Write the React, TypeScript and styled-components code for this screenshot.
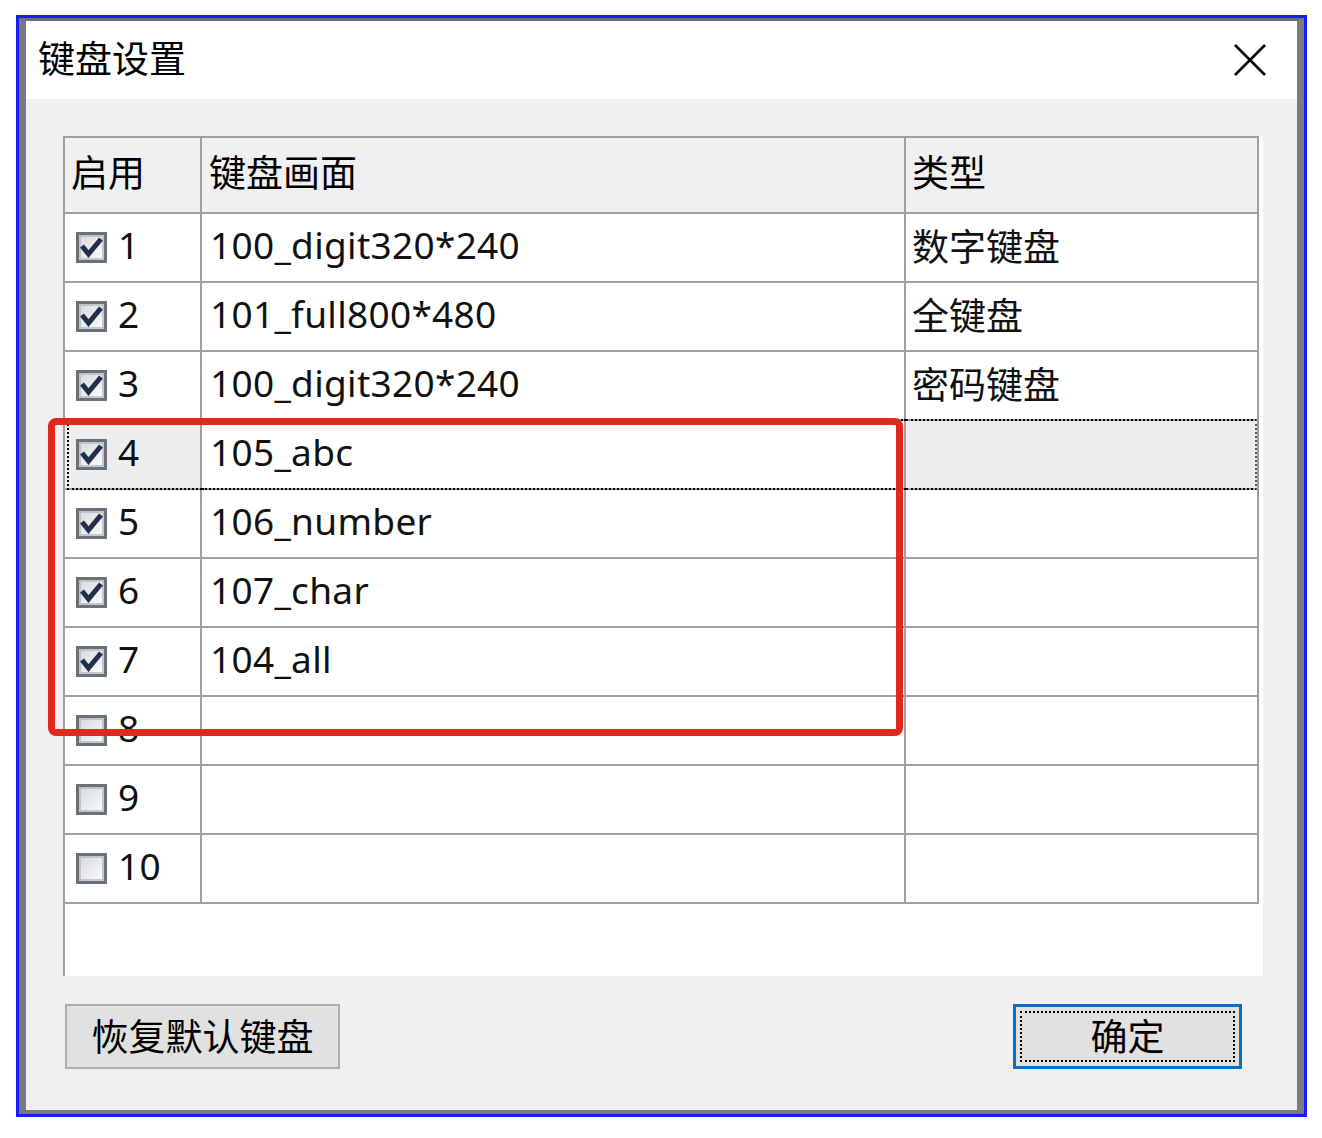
import React from 'react'
import styled, { createGlobalStyle } from 'styled-components'

const GlobalStyle = createGlobalStyle`
  html, body {
    margin: 0;
    padding: 0;
    background: #ffffff;
  }
  body {
    font-family: 'Noto Sans', 'Noto Sans CJK SC', sans-serif;
    color: #000;
  }
`

const Frame = styled.div`
  position: relative;
  margin: 15px 0 0 16px;
  width: 1291px;
  height: 1102px;
  box-sizing: border-box;
  border: 3px solid #1a1aff;
  display: flex;
`

const Window = styled.div`
  flex: 1;
  display: flex;
  flex-direction: column;
  box-sizing: border-box;
  border-top: 3px solid #6f6f6f;
  border-left: 7px solid #7a7a7a;
  border-right: 7px solid #7c7c7c;
  border-bottom: 4px solid #7a7a7a;
  box-shadow: inset 2px 0 0 #cfcfcf;
`

const TitleBar = styled.div`
  height: 78px;
  flex: none;
  background: #ffffff;
  display: flex;
  align-items: center;
  justify-content: space-between;
  padding: 0 30px 0 12px;
`

const Title = styled.div`
  font-family: 'Noto Sans CJK SC', sans-serif;
  font-size: 37px;
  line-height: 1;
  margin-top: -6px;
`

const Body = styled.div`
  flex: 1;
  background: #f0f0f0;
  display: flex;
  flex-direction: column;
  padding: 37px 29px 0 37px;
`

const ListBox = styled.div`
  width: 1200px;
  height: 840px;
  box-sizing: border-box;
  background: #ffffff;
  border-left: 2px solid #a0a0a0;
`

const Grid = styled.div`
  display: grid;
  grid-template-columns: 137px 704px 353px;
  width: 1194px;
`

const HeadCell = styled.div<{ $pad: number }>`
  height: 78px;
  box-sizing: border-box;
  background: #f0f0f0;
  border-top: 2px solid #a0a0a0;
  border-right: 2px solid #a0a0a0;
  border-bottom: 2px solid #a0a0a0;
  display: flex;
  align-items: center;
  padding-left: ${(p) => p.$pad}px;
  padding-bottom: 8px;
  font-family: 'Noto Sans CJK SC', sans-serif;
  font-size: 37px;
`

const Row = styled.div`
  display: contents;
`

const Cell = styled.div<{ $pad: number; $shade?: boolean; $focus?: boolean; $cjk?: boolean; $first?: boolean; $last?: boolean }>`
  position: relative;
  height: 69px;
  box-sizing: border-box;
  border-right: 2px solid #a0a0a0;
  border-bottom: 2px solid #a0a0a0;
  background: ${(p) => (p.$shade ? '#eeeeee' : '#ffffff')};
  display: flex;
  align-items: center;
  padding-left: ${(p) => p.$pad}px;
  padding-bottom: 6px;
  font-family: ${(p) => (p.$cjk ? "'Noto Sans CJK SC', sans-serif" : "'Noto Sans', 'Noto Sans CJK SC', sans-serif")};
  font-size: 37px;
  letter-spacing: ${(p) => (p.$cjk ? 0 : 0.3)}px;
  color: #111;
  white-space: nowrap;
  ${(p) =>
    p.$focus
      ? `
    &::after {
      content: '';
      position: absolute;
      left: ${p.$first ? 2 : 0}px;
      right: ${p.$last ? 0 : -2}px;
      top: -2px;
      bottom: -2px;
      border-top: 2px dotted #000;
      border-bottom: 2px dotted #000;
      ${p.$first ? 'border-left: 2px dotted #000;' : ''}
      ${p.$last ? 'border-right: 2px dotted #555;' : ''}
      pointer-events: none;
    }
  `
      : ''}
`

const Box = styled.span`
  display: flex;
  margin-top: 6px;
`

const Num = styled.span`
  margin-left: 11px;
`

const Footer = styled.div`
  margin-top: 28px;
  display: flex;
  justify-content: space-between;
  padding: 0 26px 0 2px;
`

const Button = styled.div<{ $default?: boolean }>`
  height: 65px;
  width: ${(p) => (p.$default ? 229 : 275)}px;
  box-sizing: border-box;
  background: #e1e1e1;
  border: ${(p) => (p.$default ? '3px solid #0a6fc4' : '2px solid #adadad')};
  display: flex;
  align-items: center;
  justify-content: center;
  font-family: 'Noto Sans CJK SC', sans-serif;
  font-size: 37px;
  padding-bottom: 4px;
  position: relative;
  ${(p) =>
    p.$default
      ? `
    &::after {
      content: '';
      position: absolute;
      inset: 4px;
      border: 2px dotted #000;
    }
  `
      : ''}
`

const Annotation = styled.div`
  position: absolute;
  left: 29px;
  top: 400px;
  width: 855px;
  height: 318px;
  box-sizing: border-box;
  border: 7px solid #e2281d;
  border-radius: 8px;
  pointer-events: none;
`

const Check = ({ on }: { on: boolean }) => (
  <svg width="31" height="31" viewBox="0 0 31 31">
    <defs>
      <linearGradient id={on ? 'cbOn' : 'cbOff'} x1="0" y1="0" x2="1" y2="1">
        <stop offset="0" stopColor="#d4d6da" />
        <stop offset="1" stopColor="#ffffff" />
      </linearGradient>
    </defs>
    <rect x="1.5" y="1.5" width="28" height="28" fill={`url(#${on ? 'cbOn' : 'cbOff'})`} stroke="#6c7077" strokeWidth="3" />
    <rect x="4" y="4" width="23" height="23" fill="none" stroke="#b5b9c2" strokeWidth="1.5" />
    {on && (
      <path d="M6 14 L12.5 22 L25 7" fill="none" stroke="#1f2f4c" strokeWidth="5" strokeLinejoin="miter" />
    )}
  </svg>
)

const CloseIcon = () => (
  <svg width="34" height="32" viewBox="0 0 34 32">
    <path d="M2 1 L32 31 M32 1 L2 31" stroke="#000" strokeWidth="2.6" />
  </svg>
)

const rows = [
  { n: 1, on: true, name: '100_digit320*240', type: '数字键盘' },
  { n: 2, on: true, name: '101_full800*480', type: '全键盘' },
  { n: 3, on: true, name: '100_digit320*240', type: '密码键盘' },
  { n: 4, on: true, name: '105_abc', type: '', focus: true },
  { n: 5, on: true, name: '106_number', type: '' },
  { n: 6, on: true, name: '107_char', type: '' },
  { n: 7, on: true, name: '104_all', type: '' },
  { n: 8, on: false, name: '', type: '' },
  { n: 9, on: false, name: '', type: '' },
  { n: 10, on: false, name: '', type: '' },
]

export default function App() {
  return (
    <>
      <GlobalStyle />
      <Frame>
        <Window>
          <TitleBar>
            <Title>键盘设置</Title>
            <CloseIcon />
          </TitleBar>
          <Body>
            <ListBox>
              <Grid>
                <HeadCell $pad={6}>启用</HeadCell>
                <HeadCell $pad={7}>键盘画面</HeadCell>
                <HeadCell $pad={6}>类型</HeadCell>
                {rows.map((r) => (
                  <Row key={r.n}>
                    <Cell $pad={11} $shade={r.focus} $focus={r.focus} $first>
                      <Box>
                        <Check on={r.on} />
                      </Box>
                      <Num>{r.n}</Num>
                    </Cell>
                    <Cell $pad={8} $focus={r.focus}>
                      {r.name}
                    </Cell>
                    <Cell $pad={6} $shade={r.focus} $focus={r.focus} $cjk $last>
                      {r.type}
                    </Cell>
                  </Row>
                ))}
              </Grid>
            </ListBox>
            <Footer>
              <Button>恢复默认键盘</Button>
              <Button $default>确定</Button>
            </Footer>
          </Body>
        </Window>
        <Annotation />
      </Frame>
    </>
  )
}
